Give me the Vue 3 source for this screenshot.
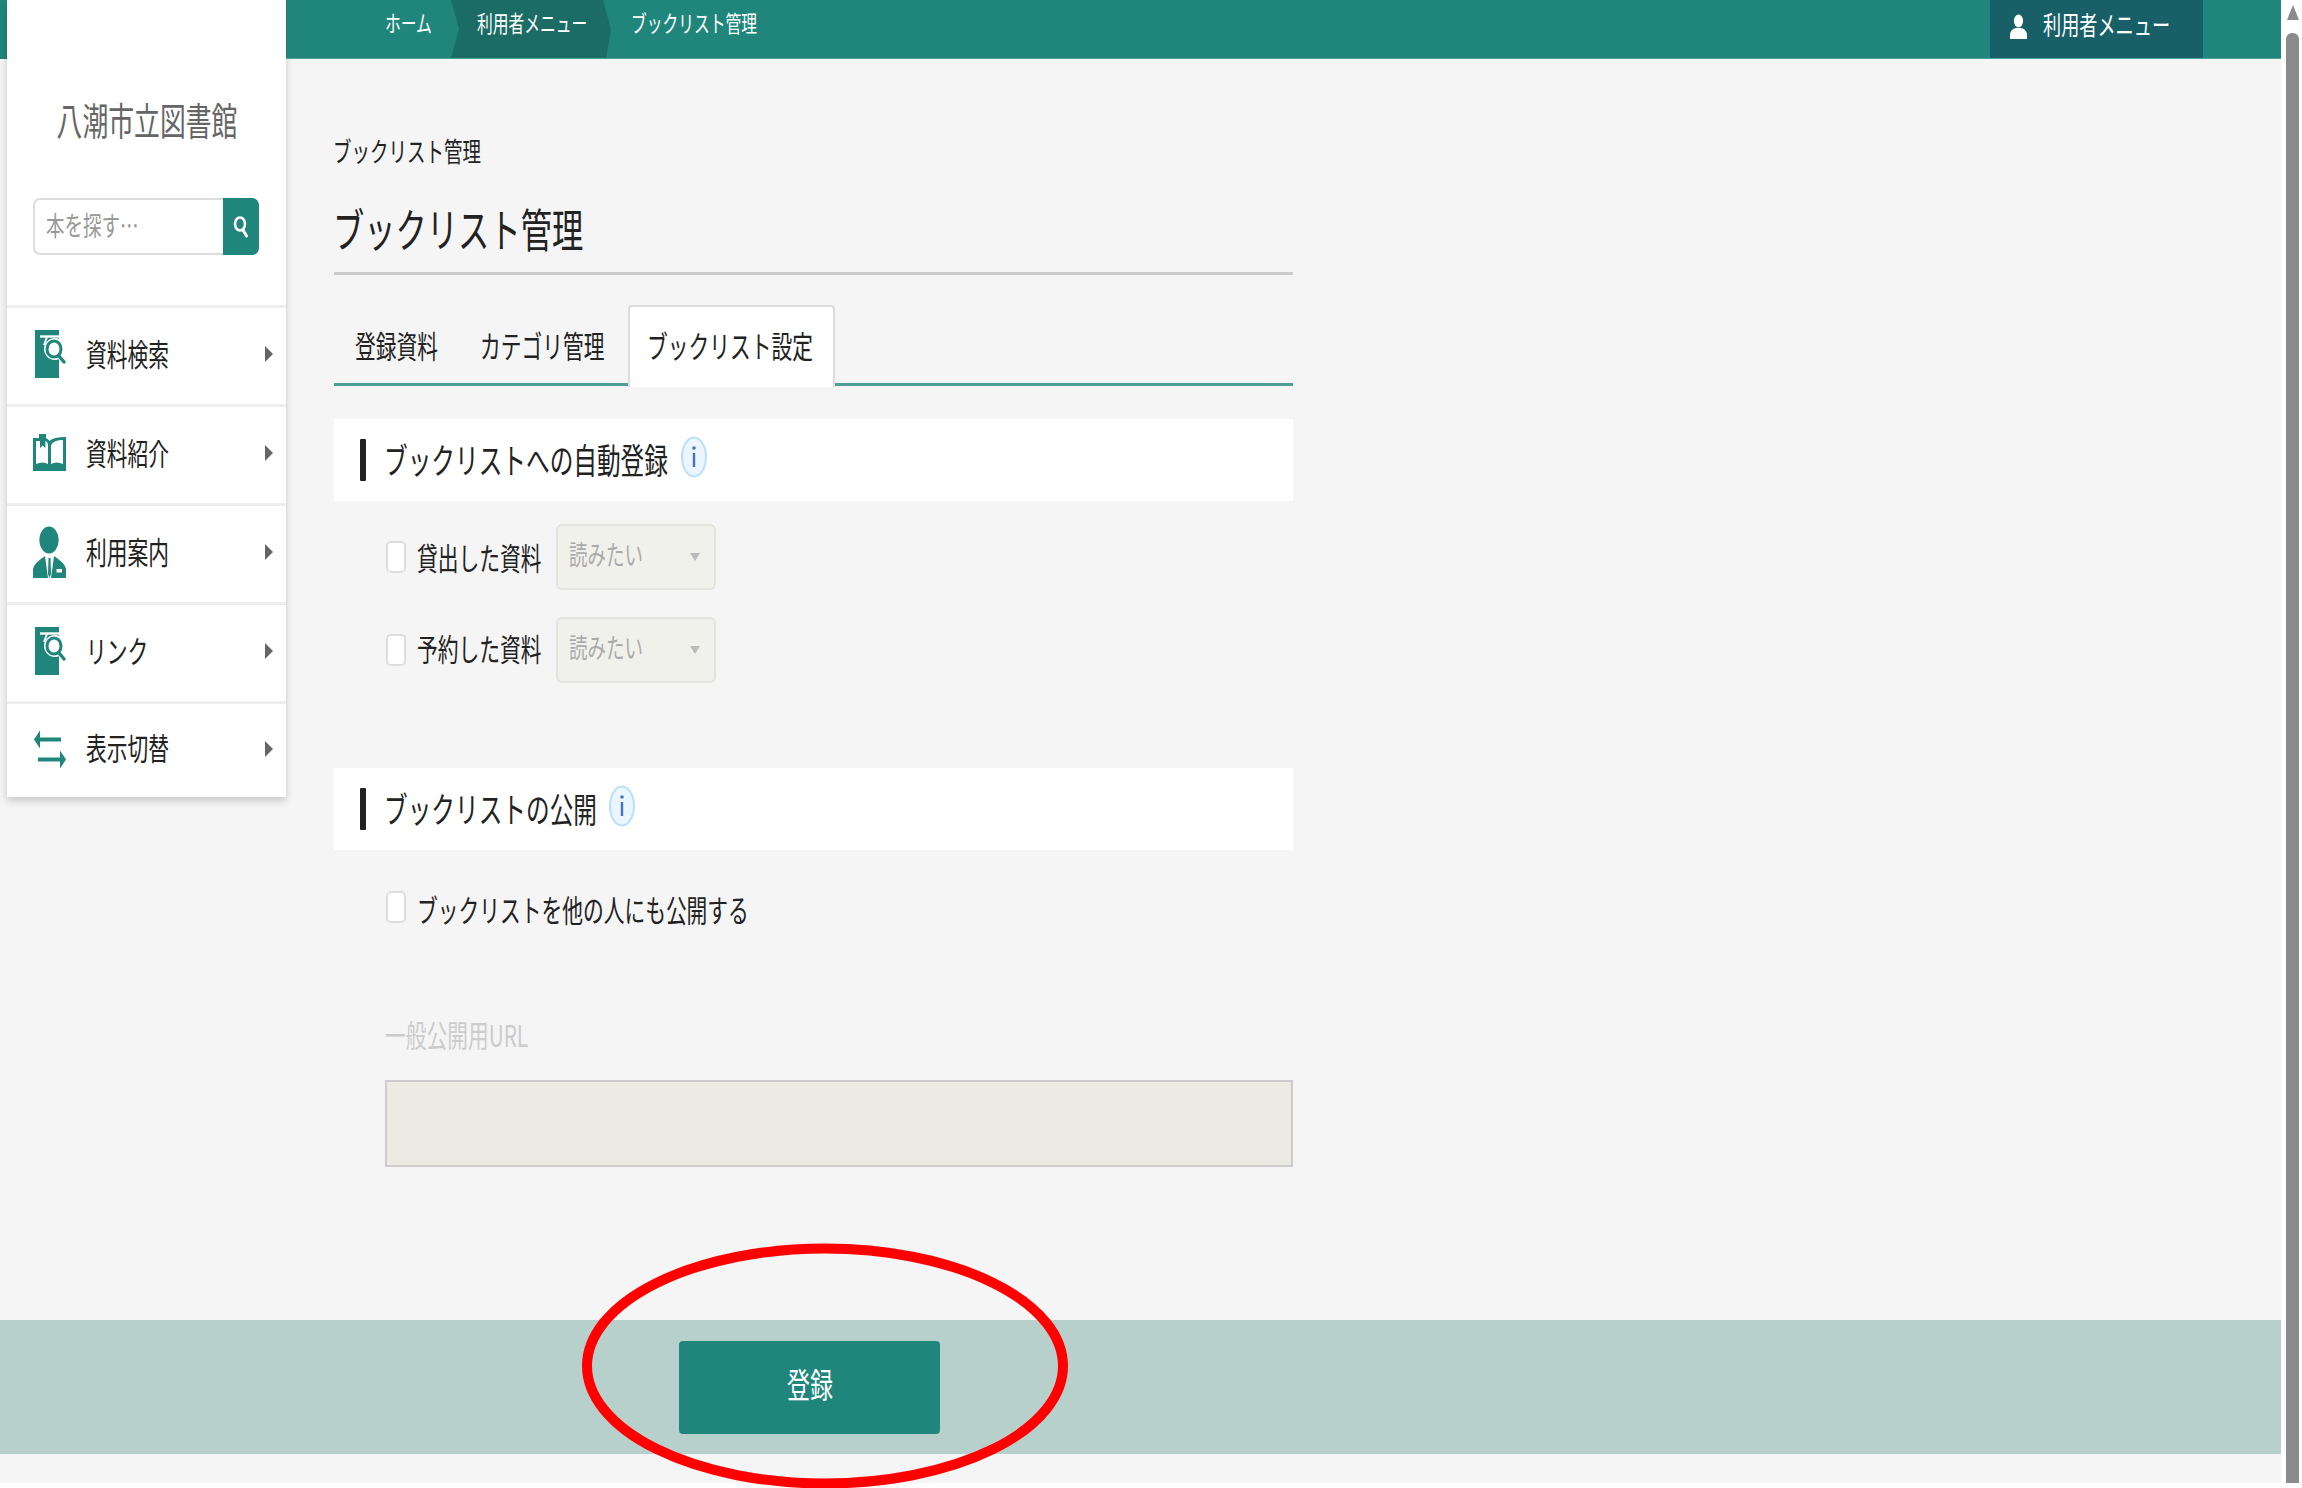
<template>
  <div class="page">
    <div class="content">
      <div class="top">
        <!-- left column -->
        <aside class="side-col">
          <div class="side">
            <div class="side-head">
              <div class="side-title sq">八潮市立図書館</div>
              <div class="search">
                <div class="search-input"><span class="sq">本を探す…</span></div>
                <div class="search-btn">
                  <svg width="16" height="22" viewBox="0 0 16 22">
                    <ellipse cx="7" cy="8" rx="5" ry="6.5" fill="none" stroke="#fff" stroke-width="2.6" />
                    <path d="M10 14l3.5 6" stroke="#fff" stroke-width="3" stroke-linecap="round" />
                  </svg>
                </div>
              </div>
            </div>
            <div v-for="item in menu" :key="item.label" class="menu-row">
              <div class="menu-icon">
                <svg v-if="item.icon === 'search'" width="33" height="48" viewBox="0 0 33 48">
                  <rect x="2" y="0" width="24" height="48" fill="#20867c" />
                  <path d="M7 6.5H27" stroke="#fff" stroke-width="2.4" />
                  <path d="M14 7l-3 8" stroke="#fff" stroke-width="2" />
                  <circle cx="22" cy="19" r="11" fill="#fff" />
                  <rect x="26" y="0" width="7" height="4.5" fill="#fff" />
                  <path d="M2 0H26V4H2z" fill="#20867c" />
                  <ellipse cx="21" cy="19" rx="7" ry="8" fill="#fff" stroke="#20867c" stroke-width="3" />
                  <path d="M26 26l5 6" stroke="#20867c" stroke-width="3.4" stroke-linecap="round" />
                </svg>
                <svg v-else-if="item.icon === 'book'" width="33" height="38" viewBox="0 0 33 38">
                  <path d="M0 4H6V0H13V4Q15 5 16.5 7Q20 3 33 3V37H0Z" fill="#20867c" />
                  <path d="M3 7H7V14L9.7 11.5L12.4 14V6.8Q15 8 15 11V30Q10 27 3 30Z" fill="#fff" />
                  <path d="M18 11Q21 6 30 6V30Q23 27 18 30Z" fill="#fff" />
                </svg>
                <svg v-else-if="item.icon === 'person'" width="33" height="52" viewBox="0 0 33 52">
                  <ellipse cx="16" cy="14" rx="9.7" ry="13.5" fill="#20867c" />
                  <path d="M0 52V43Q1 37 12 30L15 52Z" fill="#20867c" />
                  <path d="M33 52V43Q32 37 21 30L18 52Z" fill="#20867c" />
                  <path d="M15.5 32H17.5L18 48L16.5 52L15 48Z" fill="#20867c" />
                  <rect x="23.5" y="43" width="5.5" height="3.5" fill="#fff" />
                </svg>
                <svg v-else width="34" height="42" viewBox="0 0 34 42">
                  <path d="M6 11.5H28" stroke="#20867c" stroke-width="4" />
                  <path d="M1 11.5L7 2.5V20.5Z" fill="#20867c" />
                  <path d="M5 31.5H28" stroke="#20867c" stroke-width="4" />
                  <path d="M33 31.5L27 22.5V40.5Z" fill="#20867c" />
                </svg>
              </div>
              <span class="menu-label sq">{{ item.label }}</span>
              <span class="menu-arrow"></span>
            </div>
          </div>
        </aside>

        <div class="right">
          <header class="header">
            <span class="crumb-home sq">ホーム</span>
            <div class="crumb-seg"><span class="crumb-text sq">利用者メニュー</span></div>
            <span class="crumb-last sq">ブックリスト管理</span>
            <div class="user-menu">
              <svg class="user-icon" width="17" height="25" viewBox="0 0 17 25">
                <ellipse cx="8.5" cy="7" rx="4.6" ry="6.5" fill="#fff" />
                <path d="M0 25V20Q1 15 6 14H11Q16 15 17 20V25Z" fill="#fff" />
              </svg>
              <span class="user-label sq">利用者メニュー</span>
            </div>
          </header>

          <main class="main">
            <div class="page-crumb sq">ブックリスト管理</div>
            <h1 class="title"><span class="sq">ブックリスト管理</span></h1>

            <div class="tabs">
              <div class="tab tab-a"><span class="sq">登録資料</span></div>
              <div class="tab tab-b"><span class="sq">カテゴリ管理</span></div>
              <div class="tab tab-c active"><span class="sq">ブックリスト設定</span></div>
            </div>

            <section class="sec-head first">
              <span class="sec-bar"></span>
              <span class="sec-title w-auto-reg sq">ブックリストへの自動登録</span>
              <svg class="info" width="26" height="42" viewBox="0 0 26 42">
                <ellipse cx="13" cy="21" rx="12" ry="19.5" fill="#eaf5fd" stroke="#b9e0fb" stroke-width="2" />
                <circle cx="13" cy="12" r="1.8" fill="#4a70b8" />
                <rect x="11.8" y="17" width="2.4" height="14" fill="#4a70b8" />
              </svg>
            </section>

            <div v-for="(row, i) in autoRows" :key="row" class="opt-row" :class="{ second: i === 1 }">
              <input type="checkbox" class="cb" />
              <span class="opt-label sq">{{ row }}</span>
              <div class="sel">
                <span class="sel-text sq">読みたい</span>
                <span class="sel-arrow"></span>
              </div>
            </div>

            <section class="sec-head pub">
              <span class="sec-bar"></span>
              <span class="sec-title w-pub sq">ブックリストの公開</span>
              <svg class="info" width="26" height="42" viewBox="0 0 26 42">
                <ellipse cx="13" cy="21" rx="12" ry="19.5" fill="#eaf5fd" stroke="#b9e0fb" stroke-width="2" />
                <circle cx="13" cy="12" r="1.8" fill="#4a70b8" />
                <rect x="11.8" y="17" width="2.4" height="14" fill="#4a70b8" />
              </svg>
            </section>

            <div class="pub-row">
              <input type="checkbox" class="cb" />
              <span class="pub-label sq">ブックリストを他の人にも公開する</span>
            </div>

            <div class="url-label sq">一般公開用URL</div>
            <input class="url-input" disabled />
          </main>
        </div>
      </div>

      <footer class="footer">
        <button class="submit"><span class="submit-text sq">登録</span></button>
      </footer>
    </div>

    <div class="scrollbar">
      <span class="scroll-up"></span>
      <span class="scroll-thumb"></span>
    </div>

    <!-- hand drawn annotation on top of the screenshot -->
    <svg class="mark" width="2302" height="1488" viewBox="0 0 2302 1488">
      <ellipse cx="825" cy="1366" rx="238" ry="117.5" fill="none" stroke="#f00" stroke-width="10" />
    </svg>
  </div>
</template>

<script setup>
const menu = [
  { label: "資料検索", icon: "search" },
  { label: "資料紹介", icon: "book" },
  { label: "利用案内", icon: "person" },
  { label: "リンク", icon: "search" },
  { label: "表示切替", icon: "switch" },
];

const autoRows = ["貸出した資料", "予約した資料"];
</script>

<style scoped>
.page {
  position: relative;
  display: flex;
  width: 2302px;
  height: 1488px;
  overflow: hidden;
  background: #fff;
  color: #222;
  font-family: "Noto Sans CJK JP", "Noto Sans", sans-serif;
}

/* the screenshot text is squeezed horizontally */
.sq {
  display: block;
  white-space: nowrap;
  transform: scaleX(0.68);
  transform-origin: left center;
}

.content {
  display: flex;
  flex-direction: column;
  width: 2281px;
  height: 1483px;
  background: #f5f5f5;
}

.top {
  display: flex;
  height: 1320px;
}

.side-col {
  width: 286px;
  padding-left: 7px;
  box-sizing: border-box;
  background: linear-gradient(#20867c, #20867c) no-repeat 0 0 / 7px 59px;
}

.side {
  background: #fff;
  box-shadow: 0 4px 8px rgba(0, 0, 0, 0.18);
}

.side-head {
  height: 305px;
  padding-top: 94px;
  box-sizing: border-box;
}

.side-title {
  width: 266px;
  margin: 0 auto;
  font-size: 38px;
  line-height: 50px;
  color: #666;
  transform-origin: center;
}

.search {
  display: flex;
  width: 226px;
  height: 57px;
  margin: 54px 0 0 26px;
}

.search-input {
  flex: 1;
  display: flex;
  align-items: center;
  padding: 0 0 6px 11px;
  background: #fff;
  border: 2px solid #ddd;
  border-right: none;
  border-radius: 7px 0 0 7px;
  font-size: 27.2px;
  color: #999;
}

.search-btn {
  display: flex;
  align-items: center;
  justify-content: center;
  width: 36px;
  background: #20867c;
  border-radius: 0 7px 7px 0;
}

.menu-row {
  display: flex;
  align-items: center;
  height: 99px;
  padding: 0 13px 4px 26px;
  box-sizing: border-box;
  border-top: 3px solid #eee;
}

.menu-row:last-child {
  height: 96px;
}

.menu-icon {
  display: flex;
  align-items: center;
  width: 53px;
  flex: none;
}

.menu-label {
  margin-bottom: 3px;
  font-size: 30.5px;
  line-height: 40px;
  color: #222;
}

.menu-arrow {
  width: 0;
  height: 0;
  margin-left: auto;
  border-left: 8px solid #666;
  border-top: 8px solid transparent;
  border-bottom: 8px solid transparent;
}

.right {
  flex: 1;
  display: flex;
  flex-direction: column;
}

.header {
  display: flex;
  align-items: stretch;
  height: 59px;
  box-sizing: border-box;
  padding-left: 99px;
  background: #20867c;
  border-bottom: 1px solid #4ea49b;
  color: #fff;
  font-size: 23.2px;
  line-height: 45px;
}

.crumb-home {
  width: 66px;
}

.crumb-seg {
  width: 160px;
  padding-left: 26px;
  box-sizing: border-box;
  background: #1c6c66;
  clip-path: polygon(0 0, 95% 0, 100% 50%, 97% 100%, 0 100%, 5% 50%);
}

.crumb-last {
  width: 126px;
  margin-left: 20px;
}

.user-menu {
  display: flex;
  align-items: center;
  gap: 16px;
  width: 213px;
  margin-left: auto;
  margin-right: 78px;
  padding-left: 20px;
  box-sizing: border-box;
  background: #195f68;
  font-size: 26.7px;
  line-height: 34px;
}

.user-icon {
  flex: none;
  margin-bottom: 5px;
}

.user-label {
  width: 127px;
  margin-bottom: 10px;
}

.main {
  display: flex;
  flex-direction: column;
  width: 959px;
  margin-left: 48px;
}

.page-crumb {
  margin-top: 74px;
  margin-left: -1px;
  font-size: 27.2px;
  line-height: 34px;
}

.title {
  margin: 30px 0 0;
  padding-bottom: 15px;
  border-bottom: 3px solid #ccc;
  font-size: 46px;
  font-weight: 400;
  line-height: 60px;
}

.title .sq {
  margin-left: -1px;
}

.tabs {
  display: flex;
  height: 81px;
  box-sizing: border-box;
  margin-top: 30px;
  border-bottom: 3px solid #4f9f95;
  font-size: 30.5px;
  line-height: 80px;
}

.tab {
  padding-left: 21px;
  box-sizing: border-box;
}

.tab-a {
  width: 125px;
}

.tab-b {
  width: 169px;
}

.tab-c {
  width: 207px;
  padding-left: 17px;
  line-height: 76px;
}

.tab.active {
  height: 82px;
  background: #fff;
  border: 2px solid #ddd;
  border-bottom: none;
  border-radius: 4px 4px 0 0;
}

.sec-head {
  display: flex;
  align-items: center;
  height: 82px;
  padding-left: 26px;
  background: #fff;
}

.sec-head.first {
  margin-top: 33px;
}

.sec-head.pub {
  margin-top: 85px;
}

.sec-bar {
  width: 6px;
  height: 42px;
  margin-right: 18px;
  background: #222;
  border-radius: 1px;
}

.sec-title {
  margin-bottom: 2px;
  font-size: 34.8px;
  line-height: 44px;
}

.w-auto-reg {
  width: 283px;
}

.w-pub {
  width: 211px;
}

.info {
  margin: -6px 0 0 14px;
}

.opt-row {
  display: flex;
  align-items: center;
  height: 66px;
  margin-top: 23px;
  padding-left: 52px;
}

.opt-row.second {
  margin-top: 27px;
}

.opt-row.second .opt-label {
  margin-bottom: 4px;
}

.cb {
  appearance: none;
  width: 20px;
  height: 32px;
  margin: 0;
  flex: none;
  box-sizing: border-box;
  background: #fff;
  border: 2px solid #ddd;
  border-radius: 5px;
}

.opt-label {
  width: 125px;
  margin-left: 11px;
  font-size: 30.5px;
  line-height: 40px;
}

.sel {
  display: flex;
  align-items: center;
  justify-content: space-between;
  width: 160px;
  height: 66px;
  margin-left: 14px;
  padding: 0 14px 8px 11px;
  box-sizing: border-box;
  background: #f1f1ec;
  border: 2px solid #e3e3e0;
  border-radius: 6px;
}

.sel-text {
  font-size: 27.2px;
  color: #aaa;
}

.sel-arrow {
  width: 0;
  height: 0;
  margin-top: 8px;
  border-top: 8px solid #bbb;
  border-left: 5px solid transparent;
  border-right: 5px solid transparent;
}

.pub-row {
  display: flex;
  align-items: center;
  height: 33px;
  margin-top: 40px;
  padding-left: 52px;
}

.pub-label {
  margin-left: 11px;
  font-size: 30.5px;
  line-height: 40px;
  position: relative;
  top: 2px;
}

.url-label {
  margin: 94px 0 0 51px;
  font-size: 30.5px;
  line-height: 34px;
  color: #ccc;
}

.url-input {
  display: block;
  width: 908px;
  height: 87px;
  margin: 29px 0 0 51px;
  padding: 0;
  box-sizing: border-box;
  background: #ebebe4;
  border: 2px solid #ccc;
}

.footer {
  display: flex;
  align-items: center;
  height: 134px;
  padding-left: 679px;
  background: #b8d0cc;
}

.submit {
  width: 261px;
  height: 93px;
  padding: 0 0 6px 108px;
  background: #20867c;
  border: none;
  border-radius: 4px;
  color: #fff;
  font-family: inherit;
  font-size: 33.8px;
  text-align: left;
}

.submit-text {
  line-height: 44px;
}

.scrollbar {
  display: flex;
  flex-direction: column;
  align-items: center;
  width: 21px;
  height: 1483px;
  box-sizing: border-box;
  padding: 5px 3px 0 5px;
}

.scroll-up {
  width: 0;
  height: 0;
  border-bottom: 15px solid #8b8b8b;
  border-left: 6.5px solid transparent;
  border-right: 6.5px solid transparent;
}

.scroll-thumb {
  flex: 1;
  width: 13px;
  margin-top: 13px;
  background: #8b8b8b;
  border-radius: 6px 6px 0 0;
}

.mark {
  position: absolute;
  top: 0;
  left: 0;
  pointer-events: none;
}
</style>
